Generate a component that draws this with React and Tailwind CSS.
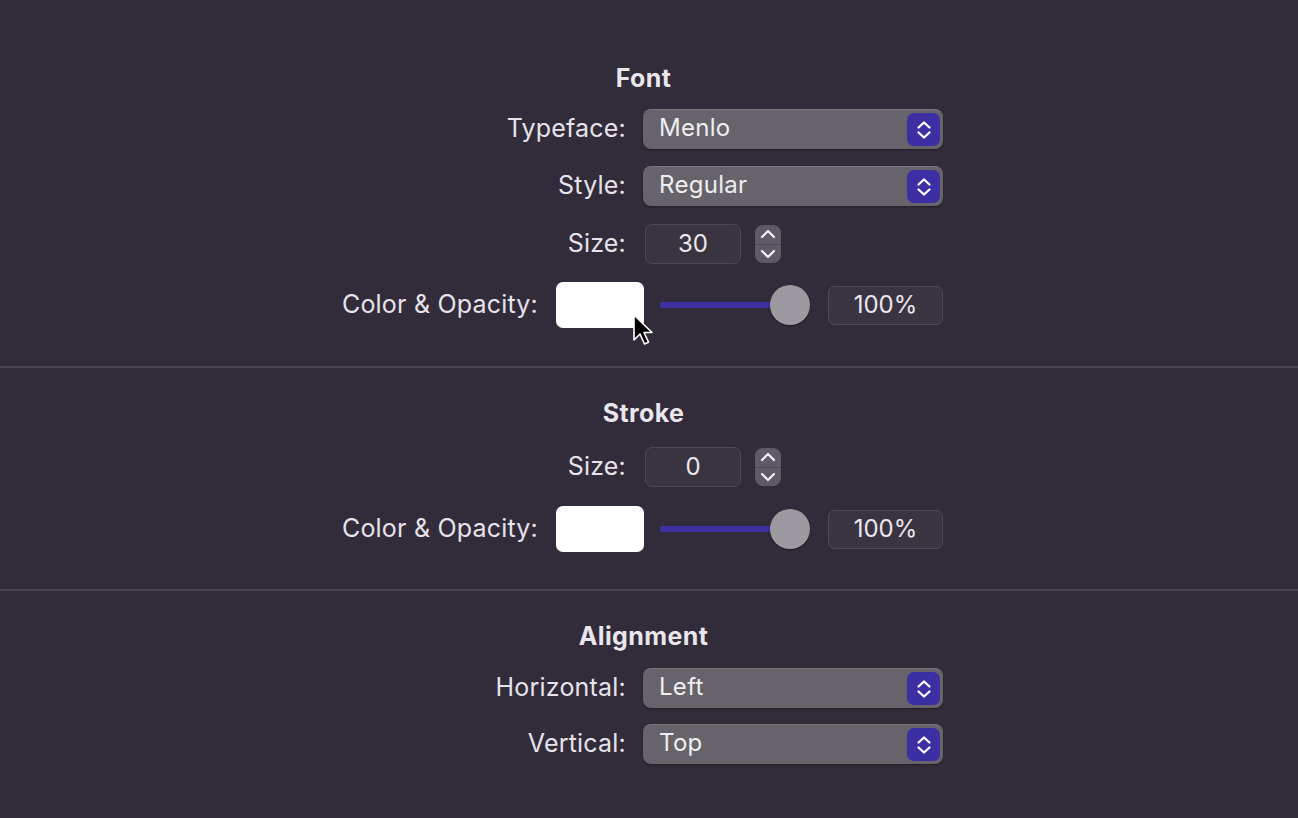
import React from "react";

const font = { fontFamily: 'Inter, "Noto Sans", "Liberation Sans", sans-serif' };

function Chevrons({ color = "#ffffff", size = 20 }) {
  return (
    <svg width={size} height={size + 4} viewBox="0 0 20 24" fill="none">
      <path d="M4.5 9.5 L10 4.5 L15.5 9.5" stroke={color} strokeWidth="2.3" strokeLinecap="round" strokeLinejoin="round" />
      <path d="M4.5 14.5 L10 19.5 L15.5 14.5" stroke={color} strokeWidth="2.3" strokeLinecap="round" strokeLinejoin="round" />
    </svg>
  );
}

function Popup({ value }) {
  return (
    <div className="flex h-[40px] w-[300px] items-center justify-between rounded-[8px] border-t border-[#7a7680] bg-[#67636b] pl-[16px] pr-[3px] shadow-[0_1px_2px_rgba(0,0,0,0.35)]">
      <span className="-mt-[3px] text-[24px] tracking-[0.3px] text-[#f0eef2]">{value}</span>
      <div className="flex h-[33px] w-[33px] items-center justify-center rounded-[7px] bg-[#3b2fa3]">
        <Chevrons />
      </div>
    </div>
  );
}

function Label({ w, children }) {
  return (
    <div className={`${w} whitespace-nowrap text-right text-[25px] tracking-[0.2px] text-[#e7e3ea]`}>{children}</div>
  );
}

function SizeRow({ value }) {
  return (
    <div className="flex h-[40px] items-center">
      <Label w="w-[286px]">Size:</Label>
      <div className="ml-[19px] flex h-[40px] w-[96px] items-center justify-center rounded-[7px] border border-[#4e4757] bg-[#3a3441] text-[24px] text-[#ebe8ee]">
        {value}
      </div>
      <div className="ml-[14px] flex h-[38px] w-[26px] flex-col overflow-hidden rounded-[8px] bg-[#5f5a65]">
        <div className="flex flex-1 items-center justify-center border-b border-[#4a4551]">
          <svg width="16" height="12" viewBox="0 0 16 12" fill="none">
            <path d="M2 9 L8 3 L14 9" stroke="#f2f0f4" strokeWidth="2.2" strokeLinecap="round" strokeLinejoin="round" />
          </svg>
        </div>
        <div className="flex flex-1 items-center justify-center">
          <svg width="16" height="12" viewBox="0 0 16 12" fill="none">
            <path d="M2 3 L8 9 L14 3" stroke="#f2f0f4" strokeWidth="2.2" strokeLinecap="round" strokeLinejoin="round" />
          </svg>
        </div>
      </div>
    </div>
  );
}

function ColorRow({ cursor }) {
  return (
    <div className="flex h-[46px] items-center">
      <Label w="w-[198px]">Color &amp; Opacity:</Label>
      <div className="relative ml-[18px] h-[46px] w-[88px] rounded-[7px] bg-white">
        {cursor && (
          <svg className="absolute left-[76px] top-[31px]" width="24" height="34" viewBox="0 0 24 34">
            <path d="M2 2 L2 27 L8 21 L12.5 31 L16.5 29.2 L12 19.5 L20 19.5 Z" fill="#000" stroke="#fff" strokeWidth="1.6" strokeLinejoin="round" />
          </svg>
        )}
      </div>
      <div className="relative ml-[16px] flex h-[40px] w-[150px] items-center">
        <div className="h-[6px] w-[130px] rounded-full bg-[#3d31a3]" />
        <div className="absolute left-[110px] top-0 h-[40px] w-[40px] rounded-full bg-[#9d99a1] shadow-[0_1px_2px_rgba(0,0,0,0.4)]" />
      </div>
      <div className="ml-[18px] flex h-[39px] w-[115px] items-center justify-center rounded-[7px] border border-[#51495a] bg-[#3a3441] text-[24px] text-[#ebe8ee]">
        100%
      </div>
    </div>
  );
}

function PopupRow({ label, value }) {
  return (
    <div className="flex h-[40px] items-center">
      <Label w="w-[286px]">{label}</Label>
      <div className="ml-[17px]">
        <Popup value={value} />
      </div>
    </div>
  );
}

function Header({ children }) {
  return (
    <div className="flex h-[28px] items-center justify-center text-[25px] font-bold leading-[28px] tracking-[0.4px] text-[#e9e6ec]">
      <span className="-ml-[11px]">{children}</span>
    </div>
  );
}

export default function App() {
  return (
    <div className="h-[818px] w-[1298px] overflow-hidden bg-[#322b39]" style={font}>
      <div className="pt-[64px]">
        <Header>Font</Header>
        <div className="ml-[340px] mt-[17px] flex flex-col">
          <PopupRow label="Typeface:" value="Menlo" />
          <div className="mt-[17px]">
            <PopupRow label="Style:" value="Regular" />
          </div>
          <div className="mt-[18px]">
            <SizeRow value="30" />
          </div>
          <div className="mt-[18px]">
            <ColorRow cursor />
          </div>
        </div>
      </div>
      <div className="mt-[38px] h-[2px] bg-[#4a4452]" />
      <div className="pt-[31px]">
        <Header>Stroke</Header>
        <div className="ml-[340px] mt-[20px] flex flex-col">
          <SizeRow value="0" />
          <div className="mt-[19px]">
            <ColorRow />
          </div>
        </div>
      </div>
      <div className="mt-[37px] h-[2px] bg-[#4a4452]" />
      <div className="pt-[31px]">
        <Header>Alignment</Header>
        <div className="ml-[340px] mt-[18px] flex flex-col">
          <PopupRow label="Horizontal:" value="Left" />
          <div className="mt-[16px]">
            <PopupRow label="Vertical:" value="Top" />
          </div>
        </div>
      </div>
    </div>
  );
}
